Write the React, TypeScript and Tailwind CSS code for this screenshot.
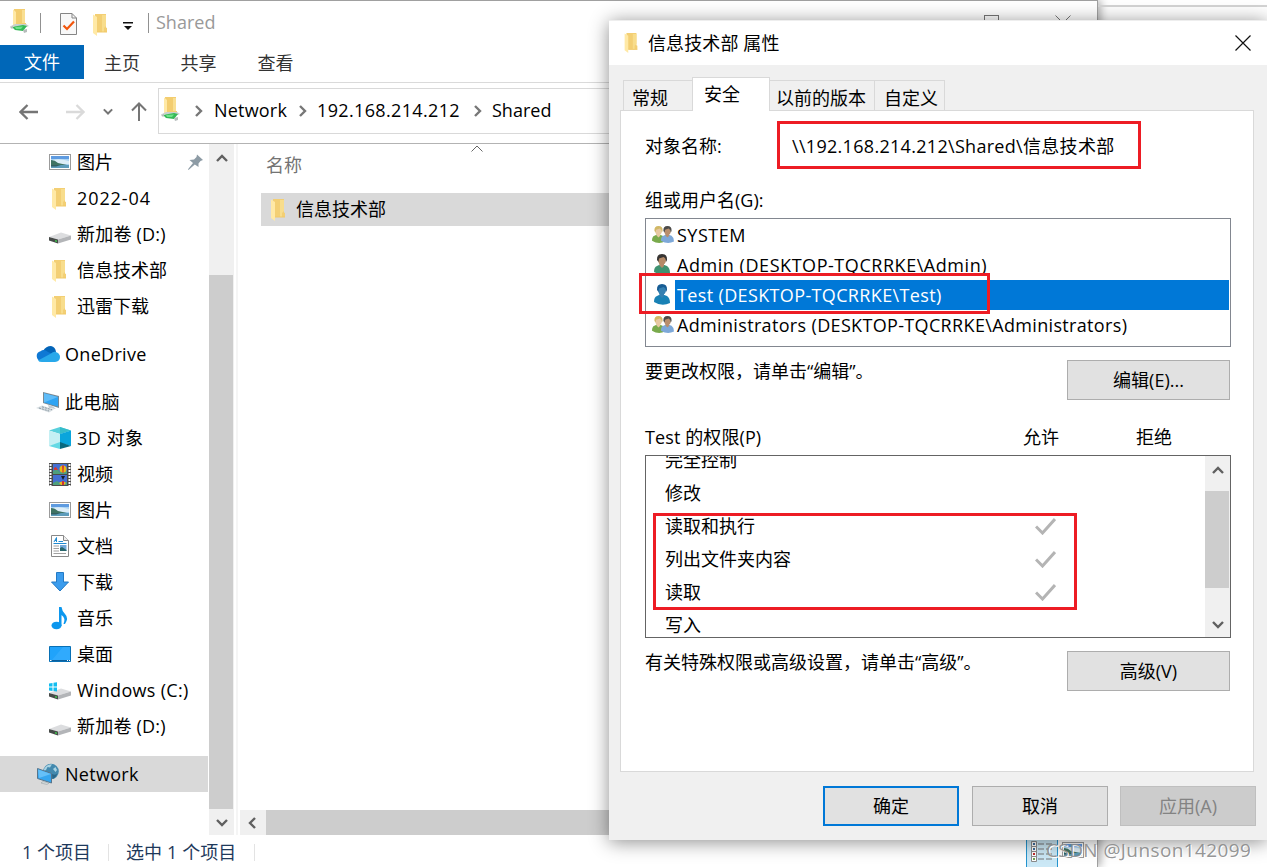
import type { ReactNode } from 'react';
import clsx from 'clsx';

interface IconProps {
  className?: string;
}

function FolderIcon({ className }: IconProps) {
  return (
    <svg viewBox="0 0 14 22" className={clsx('shrink-0', className)}>
      <path d="M2 0H13V13.5L14 14V18H2Z" fill="#f3cf74" />
      <path d="M9 1H13V12L11 14V18H9Z" fill="#f8dd8c" />
      <path d="M0 0.5L4 3V22L0 19Z" fill="#ffe9a6" />
      <path d="M4 17.5H14V18.5H4Z" fill="#f0c868" />
    </svg>
  );
}

function SharedFolderIcon({ className }: IconProps) {
  return (
    <svg viewBox="0 0 19 24" className={clsx('shrink-0', className)}>
      <path d="M4 0H15V14H16V17H5Z" fill="#f3cd70" />
      <path d="M12 1H15V14H12Z" fill="#f9df92" />
      <path d="M3 0.5L6 3V19L3 16Z" fill="#ffe9a6" />
      <path d="M1 17L5 15L16 15L19 17L14 19Z" fill="#c9d0ce" />
      <path d="M2 18L13 16L17 17L13 22L5 21Z" fill="#35b957" />
      <path d="M5 18L13 17.5L11 20H6Z" fill="#6ee387" />
      <path d="M0 17.5L3 17V19.5H1ZM13 21L17 20V23L14 24Z" fill="#b5bcbb" />
    </svg>
  );
}

function DiskIcon({ windows }: { windows?: boolean }) {
  return (
    <svg viewBox="0 0 22 22" className="h-[22px] w-[22px] shrink-0">
      <path d="M0 14L12 9.5L22 12.5L9 16.5Z" fill="#dcdddf" />
      <path d="M0 14L9 16.5V20.5L0 17.5Z" fill="#464a48" />
      <path d="M9 16.5L22 12.5V16.5L9 20.5Z" fill="#b3b5b8" />
      <path d="M6 17L8 17.6V19L6 18.4Z" fill="#3ec24a" />
      {windows && (
        <path d="M0 4.5L3.5 4V7.5H0ZM4.5 3.8L8 3.2V7.5H4.5ZM0 8.5H3.5V12L0 11.5ZM4.5 8.5H8V12.5L4.5 12Z" fill="#13bdf0" />
      )}
    </svg>
  );
}

function PictureIcon({ className = 'h-4 w-[22px]' }: IconProps) {
  return (
    <svg viewBox="0 0 22 16" className={clsx('shrink-0', className)}>
      <rect x="0.5" y="0.5" width="21" height="15" fill="#fff" stroke="#9b9b9b" />
      <path d="M2 2H20V14H2Z" fill="#a9d3f3" />
      <path d="M2 2H20V5H2Z" fill="#5e9be0" />
      <path d="M4 6Q10 4 20 7V10H4Z" fill="#dcedf7" />
      <path d="M2 6Q6 6 9 9L18 11H2Z" fill="#3f7363" />
      <path d="M2 11H20V14H2Z" fill="#5d9cbb" />
      <path d="M2 11H12L7 12.5H2Z" fill="#345f62" />
    </svg>
  );
}

function CloudIcon() {
  return (
    <svg viewBox="0 0 24 16" className="h-4 w-6 shrink-0">
      <path d="M7 5Q10 0 15 0Q19.500 1 20 6L15 9Z" fill="#0364b8" />
      <path d="M5 15A5 5 0 0 1 4.500 5.200Q8 2.500 12 6L19 9L10 14Z" fill="#0f78d4" />
      <path d="M15 7.500Q18 4.500 21 6.500Q24 8 24 11Q24 15.500 19 16H6Q3 16 2 14.500Z" fill="#28a8ea" />
    </svg>
  );
}

function ComputerIcon() {
  return (
    <svg viewBox="0 0 24 22" className="h-[22px] w-6 shrink-0">
      <path d="M7 1L23 5V17L7 12Z" fill="#778994" />
      <path d="M8 2.200L22 6V15.500L8 11.500Z" fill="#2fa4f3" />
      <path d="M8 2.200L22 6L8 11.500Z" fill="#5fbcf8" />
      <path d="M12 14L17 15.500L20 18L13 17Z" fill="#c4cdd2" />
      <path d="M0 17L6 14.500L18 18.500L13 21.500Z" fill="#d7dee2" />
      <path d="M3 17L13 20M6 15.800L16 18.800" stroke="#8b9aa4" strokeDasharray="2 1" />
    </svg>
  );
}

function CubeIcon() {
  return (
    <svg viewBox="0 0 22 22" className="h-[22px] w-[22px] shrink-0">
      <path d="M0 3.500L11 0L22 3.500L11 7Z" fill="#59d0dc" />
      <path d="M11 0L22 3.500L11 7Z" fill="#36bcca" />
      <path d="M0 3.500L11 7V16L0 19Z" fill="#c5f0f4" />
      <path d="M0 19L11 15V22Z" fill="#65d9e4" />
      <path d="M22 3.500L11 7V16L22 19Z" fill="#0aa5dc" />
      <path d="M22 19L11 15V22Z" fill="#08697f" />
    </svg>
  );
}

function VideoIcon() {
  return (
    <svg viewBox="0 0 22 23" className="h-[23px] w-[22px] shrink-0">
      <path d="M0 0H22V23H0Z" fill="#4b4b4b" />
      <path d="M1.500 1V23M20.500 1V23" stroke="#fff" strokeWidth="2" strokeDasharray="2 1" />
      <path d="M4 1H18V11H4ZM4 12H18V22H4Z" fill="#446fd2" />
      <path d="M4 8L8 6L11 9L18 8V11H4ZM4 20L8 18L11 20L18 19V22H4Z" fill="#4e9f7d" />
      <circle cx="14" cy="6" r="3.500" fill="#e8bb16" />
      <path d="M13 2.500H15L14.500 10H13.500ZM5 5L7 4L9 7H5Z" fill="#d63731" />
      <path d="M10 20A4 3 0 0 1 17 20L15 22H12Z" fill="#ebb91a" />
      <path d="M12 13H16L14 17Z" fill="#161c28" />
      <path d="M13 18H15V22H13Z" fill="#ce3037" />
    </svg>
  );
}

function DocumentIcon() {
  return (
    <svg viewBox="0 0 18 22" className="h-[22px] w-[18px] shrink-0">
      <path d="M0.500 0.500H12.500L17.500 5.500V21.500H0.500Z" fill="#fff" stroke="#888" />
      <path d="M12.500 0.500V5.500H17.500" fill="#eee" stroke="#888" />
      <path d="M3 7L5.500 2.500V7M4 5.500H6M7.500 6.500H12M2.500 8.500H15.500" stroke="#218bd1" fill="none" />
      <path d="M2.500 11H8M2.500 13.500H8M2.500 16H8M2.500 18.500H15" stroke="#a1a1a1" />
      <path d="M9 10H15.500V16H9Z" fill="#73a9d9" />
      <path d="M9 13L11 12L15.500 15V16H9Z" fill="#29666b" />
    </svg>
  );
}

function DownloadIcon() {
  return (
    <svg viewBox="0 0 20 20" className="h-5 w-5 shrink-0">
      <path d="M6.500 0.500H13.500V10H18.500L10 19L1.500 10H6.500Z" fill="#3b9ced" stroke="#237ac5" />
    </svg>
  );
}

function MusicIcon() {
  return (
    <svg viewBox="0 0 18 23" className="h-[23px] w-[18px] shrink-0">
      <ellipse cx="5.500" cy="18.500" rx="5" ry="3.800" fill="#0c97ee" />
      <path d="M8 0H10.500Q11 4 14 7Q18 11 14 17H12.500Q15 11 10.500 8V19H8Z" fill="#0c97ee" />
    </svg>
  );
}

function DesktopIcon() {
  return (
    <svg viewBox="0 0 22 16" className="h-4 w-[22px] shrink-0">
      <path d="M0.500 0.500H21.500V15.500H0.500Z" fill="#20a3fb" stroke="#0870b5" />
      <path d="M14 1H21V14H3Z" fill="#3cafff" opacity="0.6" />
      <path d="M1 14.500H21" stroke="#0c5e9b" />
      <path d="M1 14.500H2.500M18 14.500H19M20 14.500H21" stroke="#fff" />
    </svg>
  );
}

function NetworkIcon() {
  return (
    <svg viewBox="0 0 22 22" className="h-[22px] w-[22px] shrink-0">
      <circle cx="14" cy="8.500" r="7.800" fill="#4389ae" />
      <path d="M7.500 5Q10 1.500 15 1.200L13 4.500L10.500 4L9 7L6.500 8ZM16 6L18.500 4L20 7L18.500 9Z" fill="#a9d3e3" />
      <path d="M15 11Q19 13 20.500 10Q19 15 15.500 16Z" fill="#2a6688" />
      <path d="M0.500 5.500L14.500 10.500V20L0.500 15.500Z" fill="#36a6ef" stroke="#57758b" />
      <path d="M1 6.500L14 11L2 15Z" fill="#65c0f8" />
      <path d="M6 18.500L12 20L10 21.500L4 20Z" fill="#d5dbdd" stroke="#8e9a9e" strokeWidth="0.500" />
    </svg>
  );
}

function PinIcon() {
  return (
    <svg viewBox="0 0 15 16" className="h-4 w-[15px] shrink-0">
      <path d="M9 0.500L15 6L12.500 7L10.500 9.500V13L6.800 10.500L0.500 16L0 15.300L5 9L1.500 6L6 5.500L8.500 3Z" fill="#8d9ba5" />
    </svg>
  );
}

// One head and shoulders; the palette decides who it is
function Person({ hair, skin, shirt, x = 0 }: { hair: string; skin: string; shirt: string; x?: number }) {
  return (
    <g transform={`translate(${x} 0)`}>
      <path d="M0 18Q0 13 3 12L6 10.500H9L13 12Q16 14 16 19Q8 23 0 18Z" fill={shirt} />
      <path d="M5.500 9H10V12L8 14L5.500 11.500Z" fill={skin} />
      <ellipse cx="8" cy="6" rx="4" ry="5" fill={skin} />
      <path d="M3 6Q2.500 0 8 0Q13.500 0 13 6L12 8Q12 4 9.500 3L5 4.500L4.500 8Z" fill={hair} />
    </g>
  );
}

function UserIcon({ selected }: { selected?: boolean }) {
  return (
    <svg viewBox="0 0 17 22" className="mr-0.5 h-[22px] w-[17px] shrink-0">
      {selected ? (
        <Person hair="#175c94" skin="#3580b1" shirt="#1881b5" />
      ) : (
        <Person hair="#373533" skin="#b58a67" shirt="#3f9270" />
      )}
    </svg>
  );
}

function GroupIcon() {
  return (
    <svg viewBox="0 0 27 22" className="h-[18px] w-[22px] shrink-0">
      <Person hair="#d1b866" skin="#e7c8a1" shirt="#79aa4c" />
      <Person hair="#4c4b49" skin="#b88e6d" shirt="#7da8d8" x={11} />
    </svg>
  );
}

type Direction = 'up' | 'down' | 'left' | 'right';

const chevronPaths: Record<Direction, string> = {
  up: 'M1 8L6 3L11 8',
  down: 'M1 4L6 9L11 4',
  left: 'M8 1L3 6L8 11',
  right: 'M4 1L9 6L4 11',
};

function Chevron({ direction, className = 'h-3 w-3 text-[#606060]' }: { direction: Direction; className?: string }) {
  return (
    <svg viewBox="0 0 12 12" className={clsx('shrink-0', className)}>
      <path d={chevronPaths[direction]} fill="none" stroke="currentColor" strokeWidth="2.400" />
    </svg>
  );
}

function ArrowIcon({ className }: IconProps) {
  return (
    <svg viewBox="0 0 20 16" className={clsx('h-4 w-5 shrink-0', className)}>
      <path d="M19 8H2M8.500 1L1.500 8L8.500 15" fill="none" stroke="currentColor" strokeWidth="2.300" />
    </svg>
  );
}

interface NavItem {
  label: string;
  icon: ReactNode;
  pinned?: boolean;
  tracking?: string;
}

const quickAccess: NavItem[] = [
  { label: '图片', icon: <PictureIcon />, pinned: true },
  { label: '2022-04', icon: <FolderIcon className="mt-0.5 mr-0.5 h-[22px] w-3.5" />, tracking: 'tracking-[0.9px]' },
  { label: '新加卷 (D:)', icon: <DiskIcon />, tracking: 'tracking-[0.2px]' },
  { label: '信息技术部', icon: <FolderIcon className="mt-0.5 mr-0.5 h-[22px] w-3.5" /> },
  { label: '迅雷下载', icon: <FolderIcon className="mt-0.5 mr-0.5 h-[22px] w-3.5" /> },
];

const computerItems: NavItem[] = [
  { label: '3D 对象', icon: <CubeIcon />, tracking: 'tracking-[0.5px]' },
  { label: '视频', icon: <VideoIcon /> },
  { label: '图片', icon: <PictureIcon /> },
  { label: '文档', icon: <DocumentIcon /> },
  { label: '下载', icon: <DownloadIcon /> },
  { label: '音乐', icon: <MusicIcon /> },
  { label: '桌面', icon: <DesktopIcon /> },
  { label: 'Windows (C:)', icon: <DiskIcon windows />, tracking: 'tracking-[0.3px]' },
  { label: '新加卷 (D:)', icon: <DiskIcon />, tracking: 'tracking-[0.2px]' },
];

function NavChild({ item }: { item: NavItem }) {
  return (
    <div className="flex h-9 items-center pr-[5px] pl-[49px]">
      <span className="mr-1.5 flex w-[22px] justify-center">{item.icon}</span>
      <span className={clsx('grow whitespace-nowrap', item.tracking)}>{item.label}</span>
      {item.pinned && <PinIcon />}
    </div>
  );
}

function NavRoot({ label, icon, active }: { label: string; icon: ReactNode; active?: boolean }) {
  return (
    <div className={clsx('flex h-9 items-center pl-9', active && 'bg-[#d9d9d9]')}>
      <span className="mr-[5px] flex w-6 justify-center">{icon}</span>
      <span className="tracking-[0.3px]">{label}</span>
    </div>
  );
}

function Sidebar() {
  return (
    <nav className="flex w-[208px] shrink-0 flex-col gap-3">
      <div>
        {quickAccess.map((item) => (
          <NavChild key={item.label} item={item} />
        ))}
      </div>
      <NavRoot label="OneDrive" icon={<CloudIcon />} />
      <div>
        <NavRoot label="此电脑" icon={<ComputerIcon />} />
        {computerItems.map((item) => (
          <NavChild key={item.label} item={item} />
        ))}
      </div>
      <NavRoot label="Network" icon={<NetworkIcon />} active />
    </nav>
  );
}

function TitleBar() {
  return (
    <div className="flex h-11 shrink-0 items-center">
      <SharedFolderIcon className="mb-1 ml-2.5 h-6 w-[19px]" />
      <span className="ml-[11px] h-5 w-px bg-[#919191]" />
      <svg viewBox="0 0 17 22" className="mt-px ml-[19px] h-[22px] w-[17px]">
        <path d="M0.500 0.500H12L16.500 5V21.500H0.500Z" fill="#f8f8f8" stroke="#858585" />
        <path d="M12 0.500V5H16.500" fill="none" stroke="#858585" />
        <path d="M3.500 12.500L7 16L14 8.500" fill="none" stroke="#f2550b" strokeWidth="2.200" />
      </svg>
      <FolderIcon className="mt-1 ml-4 h-[22px] w-3.5" />
      <svg viewBox="0 0 10 9" className="mt-1.5 ml-4 h-[9px] w-2.5">
        <path d="M0 0H10V1.500H0ZM1 4H9L5 8Z" fill="#111" />
      </svg>
      <span className="ml-[15px] h-5 w-px bg-[#919191]" />
      <span className="mb-0.5 ml-[7px] text-[18px] text-[#999]">Shared</span>
      <span className="mb-px ml-auto h-[15px] w-[15px] border border-[#777]" />
      <svg viewBox="0 0 16 16" className="mb-px mr-[26px] ml-14 h-4 w-4">
        <path d="M0.500 0.500L15.500 15.500M15.500 0.500L0.500 15.500" stroke="#777" />
      </svg>
    </div>
  );
}

function AddressBar() {
  return (
    <div className="flex h-[61px] shrink-0 items-center border-t border-[#dadada] pb-[5px]">
      <ArrowIcon className="mt-0.5 ml-[19px] text-[#757575]" />
      <ArrowIcon className="mt-0.5 ml-[26px] rotate-180 text-[#dadada]" />
      <Chevron direction="down" className="ml-[18px] h-2.5 w-2.5 text-[#757575]" />
      <svg viewBox="0 0 16 20" className="mt-0.5 ml-[18px] h-5 w-4">
        <path d="M8 19V2M1 8.500L8 1.500L15 8.500" fill="none" stroke="#757575" strokeWidth="2" />
      </svg>
      <div className="ml-[11px] flex h-[46px] grow items-center border border-[#d9d9d9]">
        <SharedFolderIcon className="mb-1 ml-0.5 h-6 w-[19px]" />
        <Chevron direction="right" className="ml-[12px] h-3 w-3 text-[#777]" />
        <span className="mb-0.5 ml-2.5 w-[73px] tracking-[0.2px]">Network</span>
        <Chevron direction="right" className="ml-[9px] h-3 w-3 text-[#777]" />
        <span className="mb-0.5 ml-[9px] w-[145px] tracking-[0.35px]">192.168.214.212</span>
        <Chevron direction="right" className="ml-[9px] h-3 w-3 text-[#777]" />
        <span className="mb-0.5 ml-[9px]">Shared</span>
      </div>
    </div>
  );
}

function Explorer() {
  return (
    <div className="flex h-[867px] w-[1098px] flex-col border-t border-r border-[#a0a0a0] bg-white shadow-[3px_0_8px_rgba(0,0,0,0.3)]">
      <TitleBar />
      <div className="flex h-[37px] shrink-0 text-[#333]">
        <span className="flex h-[34px] w-[84px] items-center justify-center bg-[#0067b8] text-white">文件</span>
        <span className="flex h-9 w-[76px] items-center justify-center">主页</span>
        <span className="flex h-9 w-[77px] items-center justify-center">共享</span>
        <span className="flex h-9 w-[77px] items-center justify-center">查看</span>
      </div>
      <AddressBar />
      <div className="flex h-[692px] shrink-0 border-t border-[#b3b3b3]">
        <Sidebar />
        <div className="ml-px flex w-[25px] shrink-0 flex-col items-center bg-[#f0f0f0]">
          <div className="flex h-[131px] pt-[9px]"><Chevron direction="up" /></div>
          <div className="mr-px h-[534px] w-6 shrink-0 bg-[#cdcdcd]" />
          <div className="flex grow items-center"><Chevron direction="down" /></div>
        </div>
        <div className="ml-0.5 w-0.5 bg-[#f5f5f5]" />
        <main className="ml-0.5 flex min-w-0 grow flex-col">
          <div className="flex h-[49px] items-center pl-[26px] text-[#737373]">
            <span className="mt-[-8px]">名称</span>
            <svg viewBox="0 0 12 7" className="mt-[-41px] ml-[169px] h-[7px] w-3">
              <path d="M0.500 6.500L6 1L11.500 6.500" fill="none" stroke="#666" />
            </svg>
          </div>
          <div className="ml-[21px] flex h-[33px] items-center bg-[#d9d9d9] pb-px pl-2.5">
            <FolderIcon className="mt-0.5 mr-[11px] h-[22px] w-3.5" />
            信息技术部
          </div>
          <div className="mt-auto flex h-[25px] bg-[#cdcdcd]">
            <span className="flex w-[26px] items-center justify-center bg-[#f0f0f0]"><Chevron direction="left" /></span>
          </div>
        </main>
      </div>
      <div className="flex min-h-0 grow items-center pt-0.5 pl-[22px] text-[#1e395b]">
        <span className="w-[86px]">1 个项目</span>
        <span className="mr-[17px] h-[17px] w-px bg-[#e3e3e3]" />
        <span className="w-[128px] tracking-[0.1px]">选中 1 个项目</span>
        <span className="h-[17px] w-px bg-[#e3e3e3]" />
        <span className="mt-[-4px] ml-auto flex h-[35px] w-8 items-start justify-center self-start border-x border-[#2595cf] bg-[#cbe8f6] pt-2">
          <svg viewBox="0 0 22 21" className="h-[21px] w-[22px]">
            <path d="M0.500 0.500H5.500V5.500H0.500ZM0.500 5.500H5.500V10.500H0.500ZM0.500 10.500H5.500V15.500H0.500ZM0.500 15.500H5.500V20.500H0.500Z" fill="#fff" stroke="#8b8b8b" />
            <path d="M7 3H13M15 3H21M7 8H13M15 8H21M7 13H13M15 13H21M7 18H13M15 18H21" stroke="#777" />
            <path d="M2 2H4V4H2ZM2 7H4V9H2Z" fill="#3d6d9c" />
            <path d="M2 12H4V14H2Z" fill="#be2d2d" />
            <path d="M2 17H4V19H2Z" fill="#6ba24f" />
          </svg>
        </span>
        <PictureIcon className="mt-[5px] mr-[13px] ml-1 h-4 w-[22px] self-start" />
      </div>
    </div>
  );
}

interface Principal {
  name: string;
  kind: 'user' | 'group';
  tracking: string;
}

const principals: Principal[] = [
  { name: 'SYSTEM', kind: 'group', tracking: 'tracking-[0.5px]' },
  { name: 'Admin (DESKTOP-TQCRRKE\\Admin)', kind: 'user', tracking: 'tracking-[0.55px]' },
  { name: 'Test (DESKTOP-TQCRRKE\\Test)', kind: 'user', tracking: 'tracking-[0.36px]' },
  { name: 'Administrators (DESKTOP-TQCRRKE\\Administrators)', kind: 'group', tracking: 'tracking-[0.34px]' },
];

const permissions = [
  { label: '完全控制', allowed: false },
  { label: '修改', allowed: false },
  { label: '读取和执行', allowed: true },
  { label: '列出文件夹内容', allowed: true },
  { label: '读取', allowed: true },
  { label: '写入', allowed: false },
];

function Button({ children, className }: { children: ReactNode; className?: string }) {
  return (
    <button className={clsx('flex h-10 shrink-0 items-center justify-center', className ?? 'w-[163px] border border-[#adadad] bg-[#e1e1e1]')}>
      {children}
    </button>
  );
}

function PrincipalList() {
  const selected = 2;

  return (
    <div className="mt-[3px] h-[129px] w-[586px] border border-[#828790] pt-px pr-px">
      {principals.map((principal, index) => (
        <div key={principal.name} className="flex h-[30px] items-center pl-1.5">
          <span className="flex w-[22px] justify-center">
            {principal.kind === 'group' ? <GroupIcon /> : <UserIcon selected={index === selected} />}
          </span>
          <span
            className={clsx(
              'ml-px flex h-full grow items-center pl-0.5 whitespace-nowrap',
              principal.tracking,
              index === selected && 'bg-[#0078d7] text-white',
            )}
          >
            {principal.name}
          </span>
        </div>
      ))}
    </div>
  );
}

function PermissionList() {
  return (
    <div className="mt-[3px] flex h-[183px] w-[586px] overflow-hidden border border-[#646464]">
      <div className="mt-[-13px] grow">
        {permissions.map((permission) => (
          <div key={permission.label} className="flex h-[33px] items-center pl-[19px]">
            <span className="w-[370px]">{permission.label}</span>
            {permission.allowed && (
              <svg viewBox="0 0 21 17" className="mt-0.5 h-[17px] w-[21px]">
                <path d="M1 8.500L7.500 15L20 1" fill="none" stroke="#b4b4b4" strokeWidth="3" />
              </svg>
            )}
          </div>
        ))}
      </div>
      <div className="flex w-[25px] shrink-0 flex-col items-center bg-[#f0f0f0]">
        <div className="flex h-[35px] shrink-0 pt-[9px]"><Chevron direction="up" /></div>
        <div className="mr-px h-[97px] w-6 shrink-0 bg-[#cdcdcd]" />
        <div className="flex grow items-end pb-[7px]"><Chevron direction="down" /></div>
      </div>
    </div>
  );
}

function PropertiesDialog() {
  return (
    <div className="absolute top-5 left-[609px] flex h-[820px] w-[658px] flex-col border-t border-[#eee] bg-[#f0f0f0] shadow-[0_2px_18px_rgba(0,0,0,0.45)]">
      <div className="flex h-11 shrink-0 items-center bg-white pb-px pl-[15px]">
        <FolderIcon className="mr-2.5 h-5 w-3.5" />
        <span className="tracking-[0.1px]">信息技术部 属性</span>
        <svg viewBox="0 0 16 16" className="mr-[16px] ml-auto h-4 w-4">
          <path d="M0.500 0.500L15.500 15.500M15.500 0.500L0.500 15.500" stroke="#111" strokeWidth="1.200" />
        </svg>
      </div>

      <div className="z-10 mb-[-1px] flex h-[46px] shrink-0 items-end pl-3.5">
        <span className="flex h-[31px] w-[69px] items-center border border-r-0 border-[#d9d9d9] pt-1 pl-2">常规</span>
        <span className="flex h-[34px] w-[78px] items-center border border-b-0 border-[#d9d9d9] bg-white pb-px pl-[11px]">安全</span>
        <span className="flex h-[31px] w-[105px] items-center border border-l-0 border-[#d9d9d9] pt-1 pl-1.5 whitespace-nowrap">以前的版本</span>
        <span className="flex h-[31px] w-[70px] items-center border border-l-0 border-[#d9d9d9] pt-1 pl-[9px] whitespace-nowrap">自定义</span>
      </div>

      <div className="ml-[11px] h-[662px] w-[634px] shrink-0 border border-[#d9d9d9] bg-white pl-6">
        <div className="flex h-[74px] items-center pb-1">
          <span className="w-[147px]">对象名称:</span>
          <span className="tracking-[0.3px]">\\192.168.214.212\Shared\信息技术部</span>
        </div>
        <div className="flex h-[30px] items-center">组或用户名(G):</div>
        <PrincipalList />
        <div className="mt-[13px] flex w-[585px] justify-between">
          <span className="mt-[-1px]">要更改权限，请单击<span className="font-['Open_Sans']">“</span>编辑<span className="font-['Open_Sans']">”</span>。</span>
          <Button>编辑(E)...</Button>
        </div>
        <div className="mt-[22px] flex h-[30px] items-center">
          <span className="w-[378px] tracking-[0.1px]">Test 的权限(P)</span>
          <span className="w-[113px]">允许</span>
          <span>拒绝</span>
        </div>
        <PermissionList />
        <div className="mt-[13px] flex w-[585px] justify-between">
          <span className="mt-[-1px]">有关特殊权限或高级设置，请单击<span className="font-['Open_Sans']">“</span>高级<span className="font-['Open_Sans']">”</span>。</span>
          <Button>高级(V)</Button>
        </div>
      </div>

      <div className="mt-3.5 flex pl-[214px]">
        <Button className="mr-[13px] w-[136px] border-2 border-[#0078d7] bg-[#e1e1e1]">确定</Button>
        <Button className="mr-3 w-[136px] border border-[#adadad] bg-[#e1e1e1]">取消</Button>
        <Button className="w-[136px] border border-[#bfbfbf] bg-[#ccc] text-[#838383]">应用(A)</Button>
      </div>
    </div>
  );
}

export default function App() {
  return (
    <div className="relative h-[867px] w-[1267px] overflow-hidden bg-white font-['Open_Sans','Noto_Sans_CJK_SC',sans-serif] text-[18px] leading-6 text-black">
      {/* edge of the window behind */}
      <div className="absolute top-[5px] right-0 h-0.5 w-[169px] bg-[#d4d4d4]" />
      <Explorer />
      <PropertiesDialog />

      {/* red callouts */}
      <div className="absolute top-[121px] left-[777px] z-20 h-12 w-[364px] border-3 border-[#ed1c24]" />
      <div className="absolute top-[273px] left-[639px] z-20 h-[41px] w-[351px] border-3 border-[#ed1c24]" />
      <div className="absolute top-[513px] left-[653px] z-20 h-[97px] w-[424px] border-3 border-[#ed1c24]" />

      <div className="absolute top-[838px] left-[1046px] z-20 text-[19px] tracking-[0.4px] whitespace-nowrap text-[#888]/90 [text-shadow:1px_1px_0_#fff]">
        CSDN @Junson142099
      </div>
    </div>
  );
}
